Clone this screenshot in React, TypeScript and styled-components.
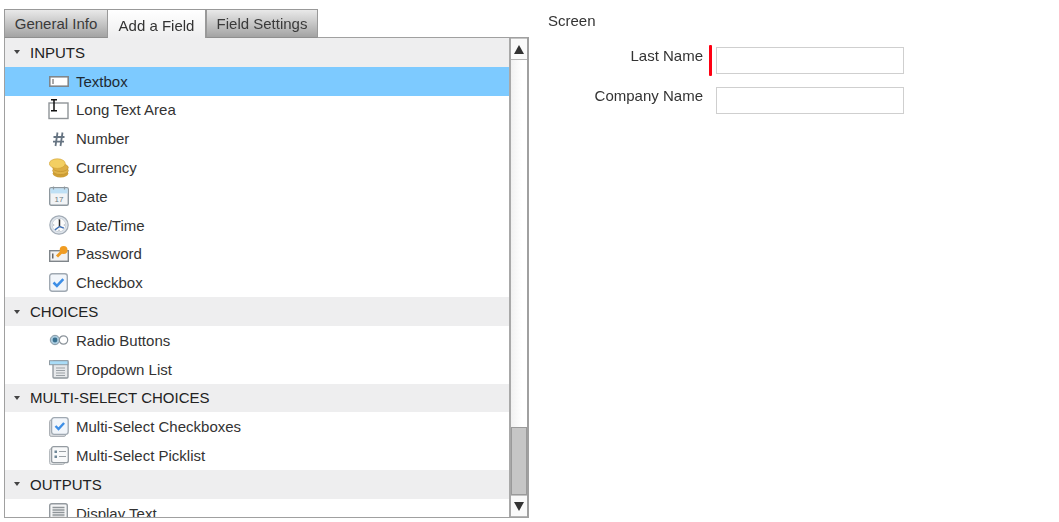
import React from "react";
import styled, { createGlobalStyle } from "styled-components";

const GlobalStyle = createGlobalStyle`
  html, body {
    margin: 0;
    padding: 0;
    background: #fff;
    overflow: hidden;
  }
  body {
    font-family: "Liberation Sans", Arial, sans-serif;
    color: #333;
  }
`;

const TextboxIcon = () => (
  <svg width="20" height="11" viewBox="0 0 20 11">
    <rect x="0.8" y="0.8" width="18.4" height="9.4" fill="#fff" stroke="#7f868b" strokeWidth="1.6" />
    <path d="M4 3v5" stroke="#555" />
  </svg>
);

const TextAreaIcon = () => (
  <svg width="21" height="21" viewBox="0 0 21 21">
    <rect x="1" y="4" width="19" height="15.5" fill="#fff" stroke="#8f9498" strokeWidth="1.4" />
    <path d="M3 0.8h6M3 11.8h6M6 0.8v11" stroke="#111" strokeWidth="1.5" fill="none" />
  </svg>
);

const NumberIcon = () => (
  <svg width="20" height="20" viewBox="0 0 20 20">
    <path d="M8.5 3.5l-2 13.5M13.5 3.5l-2 13.5M4.5 8h11M4 12.6h11" stroke="#667482" strokeWidth="1.8" fill="none" />
  </svg>
);

const CoinsIcon = () => (
  <svg width="20" height="20" viewBox="0 0 20 20">
    <ellipse cx="11.5" cy="15.5" rx="7.8" ry="4" fill="#cf9f35" />
    <ellipse cx="11.5" cy="12.6" rx="7.8" ry="4" fill="#e0b44a" stroke="#bf8f2a" strokeWidth="0.6" />
    <ellipse cx="11.5" cy="9.6" rx="7.8" ry="4" fill="#dcae45" stroke="#bf8f2a" strokeWidth="0.6" />
    <ellipse cx="8.3" cy="5.6" rx="8" ry="4.8" fill="#f3cf62" stroke="#d09f33" strokeWidth="0.6" />
  </svg>
);

const CalendarIcon = () => (
  <svg width="20" height="20" viewBox="0 0 20 20">
    <rect x="0.7" y="1.7" width="18.6" height="17.6" rx="1.5" fill="#f2f4f6" stroke="#8e989f" strokeWidth="1.4" />
    <rect x="1.4" y="2.4" width="17.2" height="5" fill="#bfe0f5" />
    <path d="M4.5 0.5v3M15.5 0.5v3" stroke="#8e989f" strokeWidth="1.2" />
    <text x="10" y="16.3" fontSize="8" textAnchor="middle" fill="#6f7a82" fontFamily="Liberation Sans">17</text>
  </svg>
);

const ClockIcon = () => (
  <svg width="20" height="20" viewBox="0 0 20 20">
    <circle cx="10" cy="10" r="9.2" fill="#dfe5ec" stroke="#a3acb6" strokeWidth="1.2" />
    <circle cx="10" cy="10" r="6.8" fill="#fbfbfb" stroke="#c4cbd3" strokeWidth="0.8" />
    <path d="M10 4v1.2M16 10h-1.2M10 16v-1.2M4 10h1.2" stroke="#8a929b" strokeWidth="0.9" />
    <path d="M10.5 4.5v7" stroke="#2f2f2f" strokeWidth="1.5" />
    <path d="M10.5 11.5l-4.6 3.4M10.5 11.5l4.4 1.6" stroke="#4272b5" strokeWidth="1.4" />
  </svg>
);

const PasswordIcon = () => (
  <svg width="20" height="16" viewBox="0 0 20 16">
    <rect x="0.7" y="4.7" width="18.6" height="10.6" fill="#f2f2f2" stroke="#7f858a" strokeWidth="1.4" />
    <path d="M3.8 7.5v5" stroke="#444" strokeWidth="1.2" />
    <circle cx="14.6" cy="4" r="3.9" fill="#f09c22" />
    <path d="M12.5 6L8 10.5" stroke="#f09c22" strokeWidth="3" />
  </svg>
);

const CheckIcon = () => (
  <svg width="19" height="19" viewBox="0 0 19 19">
    <rect x="0.7" y="0.7" width="17.6" height="17.6" rx="2.5" fill="#f1f5fa" stroke="#a0a9b2" strokeWidth="1.4" />
    <path d="M4.5 9.5l3.4 3.4 6.4-6.8" stroke="#3d8ee6" strokeWidth="2.5" fill="none" />
  </svg>
);

const RadioIcon = () => (
  <svg width="20" height="12" viewBox="0 0 20 12">
    <circle cx="6" cy="6" r="4.7" fill="#a9c9dc" stroke="#8b9aa5" strokeWidth="1" />
    <circle cx="6" cy="6" r="2.4" fill="#38708f" />
    <circle cx="14.5" cy="6" r="4.2" fill="#fff" stroke="#8c949b" strokeWidth="1.2" />
  </svg>
);

const DropdownIcon = () => (
  <svg width="20" height="19" viewBox="0 0 20 19">
    <rect x="4" y="1" width="15" height="17" rx="1" fill="#e6e8ea" stroke="#8f969c" strokeWidth="1.3" />
    <rect x="0.5" y="0.7" width="18.5" height="4" fill="#a9dcf7" stroke="#8f9ba3" strokeWidth="1" />
    <path d="M7 8h9M7 10.5h9M7 13h9M7 15.5h9" stroke="#9ba1a6" strokeWidth="1.2" />
  </svg>
);

const MultiCheckIcon = () => (
  <svg width="20" height="20" viewBox="0 0 20 20">
    <rect x="0.6" y="3" width="16" height="16.4" rx="1.5" fill="#d9dcdf" stroke="#a6abb0" />
    <rect x="2.6" y="0.7" width="16.6" height="16.6" rx="2.5" fill="#f1f5fa" stroke="#a0a9b2" strokeWidth="1.3" />
    <path d="M6.5 9l3 3 5.6-6" stroke="#3d8ee6" strokeWidth="2.4" fill="none" />
  </svg>
);

const PicklistIcon = () => (
  <svg width="20" height="19" viewBox="0 0 20 19">
    <rect x="0.6" y="2.5" width="15" height="16" rx="2" fill="#e5e7e9" stroke="#b0b5b9" />
    <rect x="2.6" y="0.7" width="16.7" height="16" rx="2" fill="#f8f9fa" stroke="#949ba1" strokeWidth="1.3" />
    <path d="M5.5 4.5h2.5v2.5h-2.5zM5.5 9.5h2.5v2.5h-2.5z" fill="#6f8797" />
    <path d="M10 5.5h7M10 10.5h7" stroke="#9aa0a5" strokeWidth="1.2" />
  </svg>
);

const DisplayTextIcon = () => (
  <svg width="19" height="20" viewBox="0 0 19 20">
    <rect x="0.7" y="0.7" width="17.6" height="18.6" rx="2" fill="#f4f5f6" stroke="#949a9f" strokeWidth="1.4" />
    <path d="M3.5 4.5h12M3.5 7h12M3.5 9.5h12M3.5 12h12M3.5 14.5h12" stroke="#8f9599" strokeWidth="1.3" />
  </svg>
);

type FieldItem = { label: string; icon: React.ReactNode; selected?: boolean };
type FieldGroup = { title: string; items: FieldItem[] };

const groups: FieldGroup[] = [
  {
    title: "INPUTS",
    items: [
      { label: "Textbox", icon: <TextboxIcon />, selected: true },
      { label: "Long Text Area", icon: <TextAreaIcon /> },
      { label: "Number", icon: <NumberIcon /> },
      { label: "Currency", icon: <CoinsIcon /> },
      { label: "Date", icon: <CalendarIcon /> },
      { label: "Date/Time", icon: <ClockIcon /> },
      { label: "Password", icon: <PasswordIcon /> },
      { label: "Checkbox", icon: <CheckIcon /> },
    ],
  },
  {
    title: "CHOICES",
    items: [
      { label: "Radio Buttons", icon: <RadioIcon /> },
      { label: "Dropdown List", icon: <DropdownIcon /> },
    ],
  },
  {
    title: "MULTI-SELECT CHOICES",
    items: [
      { label: "Multi-Select Checkboxes", icon: <MultiCheckIcon /> },
      { label: "Multi-Select Picklist", icon: <PicklistIcon /> },
    ],
  },
  {
    title: "OUTPUTS",
    items: [{ label: "Display Text", icon: <DisplayTextIcon /> }],
  },
];

const App = () => {
  return (
    <Page>
      <GlobalStyle />
      <LeftColumn>
        <Tabs>
          <Tab $width={104}>General Info</Tab>
          <Tab $width={98} $active>
            Add a Field
          </Tab>
          <Tab $width={112}>Field Settings</Tab>
        </Tabs>
        <Panel>
          <List>
            {groups.map((group) => (
              <div key={group.title}>
                <GroupHeader>
                  <Caret />
                  {group.title}
                </GroupHeader>
                {group.items.map((item) => (
                  <Row key={item.label} $selected={item.selected}>
                    <IconSlot>{item.icon}</IconSlot>
                    {item.label}
                  </Row>
                ))}
              </div>
            ))}
          </List>
          <Scrollbar>
            <ScrollButton>
              <ArrowUp />
            </ScrollButton>
            <Track>
              <Thumb />
            </Track>
            <ScrollButton>
              <ArrowDown />
            </ScrollButton>
          </Scrollbar>
        </Panel>
      </LeftColumn>
      <RightColumn>
        <ScreenTitle>Screen</ScreenTitle>
        <Form>
          <FormRow>
            <FieldLabel>Last Name</FieldLabel>
            <RequiredMark $required />
            <FieldInput />
          </FormRow>
          <FormRow>
            <FieldLabel>Company Name</FieldLabel>
            <RequiredMark />
            <FieldInput />
          </FormRow>
        </Form>
      </RightColumn>
    </Page>
  );
};

export default App;

const Page = styled.div`
  display: flex;
  width: 1059px;
  height: 522px;
  padding: 9px 0 0 4px;
  box-sizing: border-box;
  overflow: hidden;
  filter: blur(0.55px);
`;

const LeftColumn = styled.div`
  width: 525px;
  flex-shrink: 0;
`;

const Tabs = styled.div`
  display: flex;
  height: 29px;
`;

const Tab = styled.div<{ $width: number; $active?: boolean }>`
  width: ${(p) => p.$width}px;
  box-sizing: border-box;
  display: flex;
  align-items: center;
  justify-content: center;
  font-size: 15px;
  color: ${(p) => (p.$active ? "#333" : "#3a3a3a")};
  border: 1px solid #999;
  border-left-width: ${(p) => (p.$active ? 0 : 1)}px;
  border-bottom: ${(p) => (p.$active ? "none" : "1px solid #8f8f8f")};
  background: ${(p) =>
    p.$active
      ? "linear-gradient(#fff, #eeeeef)"
      : "linear-gradient(#e9e9e9, #a3a3a3)"};
  padding-top: ${(p) => (p.$active ? 2 : 0)}px;
  position: relative;
  z-index: ${(p) => (p.$active ? 1 : 0)};
`;

const Panel = styled.div`
  display: flex;
  height: 481px;
  box-sizing: border-box;
  border: 1px solid #a0a0a0;
  border-right-width: 2px;
  overflow: hidden;
  margin-top: -1px;
`;

const List = styled.div`
  flex: 1;
  min-width: 0;
  overflow: hidden;
  font-size: 15px;
  color: #333;
`;

const GroupHeader = styled.div`
  height: 28.8px;
  display: flex;
  align-items: center;
  background: #eeeeef;
  color: #222;
  padding-left: 9px;
`;

const Caret = styled.span`
  width: 0;
  height: 0;
  margin-right: 10px;
  border-left: 3.5px solid transparent;
  border-right: 3.5px solid transparent;
  border-top: 4px solid #444;
`;

const Row = styled.div<{ $selected?: boolean }>`
  height: 28.8px;
  display: flex;
  align-items: center;
  background: ${(p) => (p.$selected ? "#7dcaff" : "#fff")};
  color: ${(p) => (p.$selected ? "#1f2a33" : "#333")};
  padding-left: 43px;
`;

const IconSlot = styled.span`
  width: 21px;
  margin-right: 7px;
  display: flex;
  align-items: center;
  justify-content: center;
`;

const Scrollbar = styled.div`
  width: 18px;
  box-sizing: border-box;
  flex-shrink: 0;
  display: flex;
  flex-direction: column;
  border-left: 2px solid #a8a8a8;
  background: #fff;
`;

const ScrollButton = styled.div`
  height: 22px;
  flex-shrink: 0;
  display: flex;
  align-items: center;
  justify-content: center;
  background: #fafafa;
  border-top: 1px solid #c4c4c4;
  border-bottom: 1px solid #b5b5b5;
  box-sizing: border-box;
`;

const ArrowUp = styled.span`
  border-left: 5.5px solid transparent;
  border-right: 5.5px solid transparent;
  border-bottom: 9px solid #333;
`;

const ArrowDown = styled.span`
  border-left: 5.5px solid transparent;
  border-right: 5.5px solid transparent;
  border-top: 9px solid #333;
`;

const Track = styled.div`
  flex: 1;
  display: flex;
  flex-direction: column;
  justify-content: flex-end;
  background: linear-gradient(90deg, #f1f1f1, #fff 70%);
`;

const Thumb = styled.div`
  height: 68px;
  box-sizing: border-box;
  background: #c6c6c6;
  border: 1px solid #9a9a9a;
`;

const RightColumn = styled.div`
  margin-left: 19px;
  flex: 1;
`;

const ScreenTitle = styled.div`
  font-size: 15px;
  color: #333;
  height: 24px;
  line-height: 24px;
`;

const Form = styled.div`
  margin-top: 12px;
  display: flex;
  flex-direction: column;
  gap: 8px;
`;

const FormRow = styled.div`
  display: flex;
  align-items: flex-start;
  height: 32px;
`;

const FieldLabel = styled.label`
  width: 155px;
  text-align: right;
  font-size: 15px;
  color: #333;
  line-height: 20px;
  padding-top: 1px;
`;

const RequiredMark = styled.span<{ $required?: boolean }>`
  width: 3px;
  height: 31px;
  margin: 0 4px 0 6px;
  border-radius: 1px;
  background: ${(p) => (p.$required ? "#ff0012" : "transparent")};
`;

const FieldInput = styled.div`
  width: 188px;
  height: 27px;
  margin-top: 2px;
  box-sizing: border-box;
  border: 1.5px solid #cfcfcf;
  background: #fff;
`;
